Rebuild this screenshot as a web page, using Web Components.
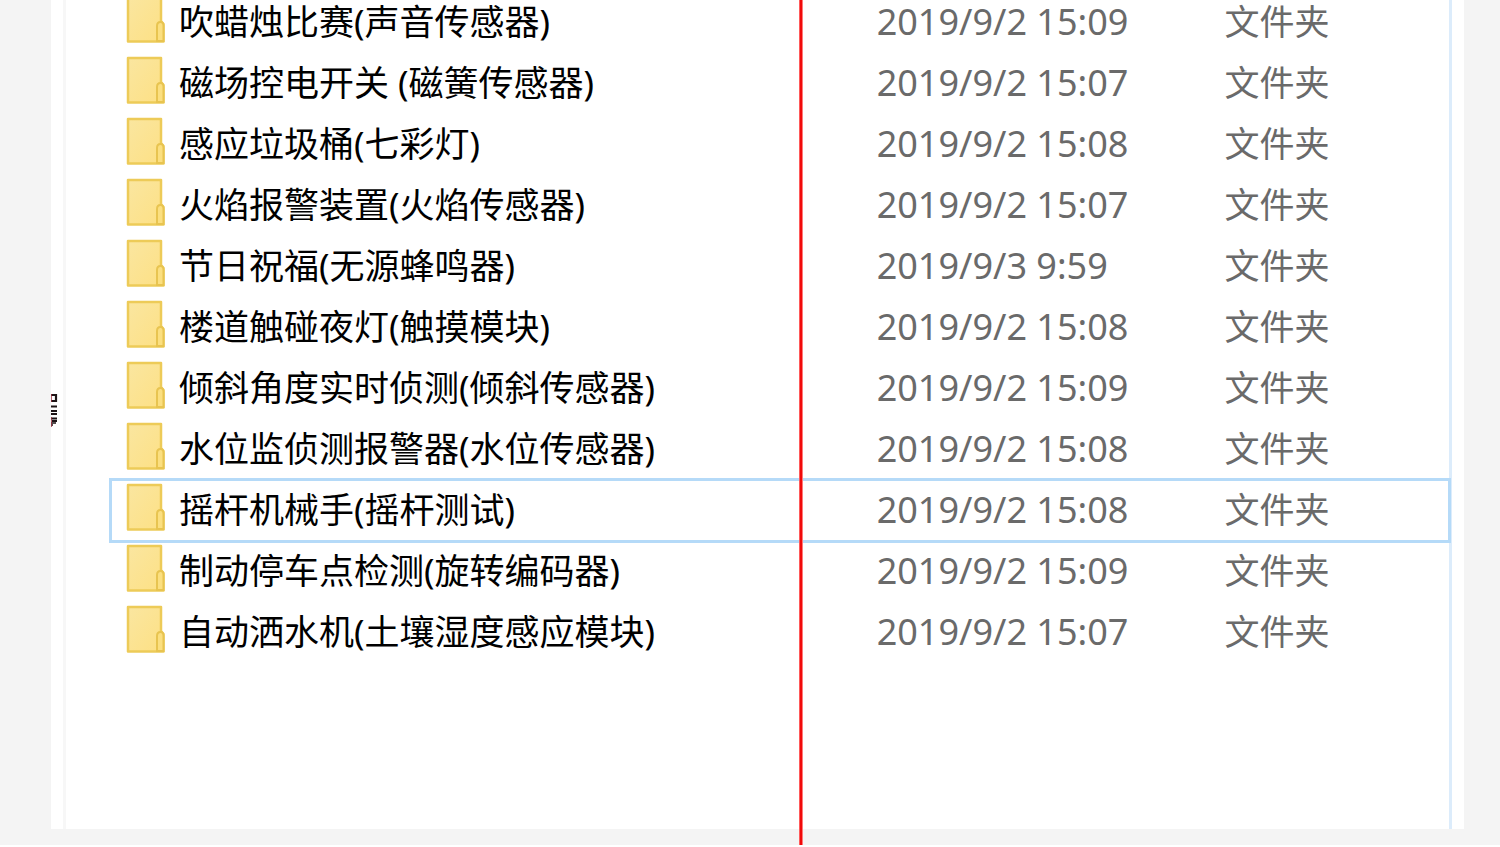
<!DOCTYPE html>
<html lang="zh-CN">
<head>
<meta charset="utf-8">
<title>文件夹</title>
<style>
html, body { margin: 0; background: #fff; }
body { font-family: "Noto Sans", "Noto Sans CJK SC", sans-serif; }
</style>
</head>
<body>
<explorer-window>
  <nav-strip slot="nav"></nav-strip>
  <file-list></file-list>
</explorer-window>
<script>
class ExplorerWindow extends HTMLElement {
  constructor() {
    super();
    this.attachShadow({ mode: 'open' }).innerHTML = `
      <style>
        :host { display: block; box-sizing: border-box; position: relative; height: calc(100vh - 2px); padding: 0 36px 16px 51px; background: #f4f4f4; overflow: hidden; }
        .panel { display: flex; height: 100%; background: #fff; overflow: hidden; }
        main { flex: 1; min-width: 0; padding-left: 45px; border-right: 3px solid #dcecfb; }
        .gutter { flex: none; width: 12px; }
        .guide { position: absolute; top: 0; bottom: 0; left: calc(50% + 49px); width: 4px; background: linear-gradient(90deg, #ff5a5a 1px, #f00a0a 1px, #f00a0a 3px, #ff7a7a 3px); }
      </style>
      <div class="panel">
        <slot name="nav"></slot>
        <main><slot></slot></main>
        <div class="gutter"></div>
      </div>
      <div class="guide"></div>`;
  }
}
class NavStrip extends HTMLElement {
  constructor() {
    super();
    this.attachShadow({ mode: 'open' }).innerHTML = `
      <style>
        :host { display: block; box-sizing: border-box; flex: none; width: 15px; padding-top: 392px; border-right: 3px solid #f7f7f7; }
        svg { display: block; }
      </style>
      <svg width="7" height="36" viewBox="0 0 7 36" aria-hidden="true">
        <g fill="none" stroke="#1c1416" stroke-width="2.200">
          <path d="M0 3H5V9H0M0 14.500H6M0 19H6M0 22H6M0 26.500H6M1 29H6"/>
          <path d="M0 31H5M0 33H2" stroke-width="1.500"/>
        </g>
        <path d="M0 2V10M0 25V35" stroke="#a03040" stroke-width="1.500"/>
      </svg>`;
  }
}
class FolderIcon extends HTMLElement {
  constructor() {
    super();
    this.attachShadow({ mode: 'open' }).innerHTML = `
      <style>:host { display: block; flex: none; width: 40px; height: 48px; } svg { display: block; overflow: visible; }</style>
      <svg width="40" height="48" viewBox="-1 3 40 48" aria-hidden="true">
        <defs><linearGradient id="g" x1="0" y1="0" x2="1" y2="1"><stop offset="0" stop-color="#fae6a0"/><stop offset="1" stop-color="#fde084"/></linearGradient></defs>
        <path d="M2 2H35V26L37.500 29V46.500H2Z" fill="url(#g)" stroke="#edcb58" stroke-width="2.500" stroke-linejoin="round"/>
        <path d="M31 46V31Q31 27 34.500 27Q37.500 27 37.500 31V46Z" fill="#fbdf80" stroke="#e8c450" stroke-width="2"/>
      </svg>`;
  }
}
const files = [
  ['吹蜡烛比赛(声音传感器)', '2019/9/2 15:09'],
  ['磁场控电开关 (磁簧传感器)', '2019/9/2 15:07'],
  ['感应垃圾桶(七彩灯)', '2019/9/2 15:08'],
  ['火焰报警装置(火焰传感器)', '2019/9/2 15:07'],
  ['节日祝福(无源蜂鸣器)', '2019/9/3 9:59'],
  ['楼道触碰夜灯(触摸模块)', '2019/9/2 15:08'],
  ['倾斜角度实时侦测(倾斜传感器)', '2019/9/2 15:09'],
  ['水位监侦测报警器(水位传感器)', '2019/9/2 15:08'],
  ['摇杆机械手(摇杆测试)', '2019/9/2 15:08', true],
  ['制动停车点检测(旋转编码器)', '2019/9/2 15:09'],
  ['自动洒水机(土壤湿度感应模块)', '2019/9/2 15:07']
];
class FileList extends HTMLElement {
  constructor() {
    super();
    this.attachShadow({ mode: 'open' }).innerHTML = `
      <style>
        :host { display: block; margin-top: -8px; }
        table { width: 100%; table-layout: fixed; border-collapse: separate; border-spacing: 0; }
        td { box-sizing: border-box; height: 61px; padding: 0 0 2px 3px; vertical-align: middle; white-space: nowrap; line-height: 48px; color: #6a6a6a; }
        .name { padding-left: 14px; color: #000; font-size: 35px; }
        .date { font-size: 36px; }
        .type { font-size: 35px; }
        .c1 { width: 57%; } .c2 { width: 26%; }
        .cell { display: flex; align-items: center; gap: 14px; }
        tr.focused { outline: 3px solid #b5daf8; outline-offset: -1px; }
      </style>
      <table>
        <colgroup><col class="c1"><col class="c2"><col></colgroup>
        <tbody>${files.map(([n, d, f]) => `<tr${f ? ' class="focused"' : ''}><td class="name"><div class="cell"><folder-icon></folder-icon><span>${n}</span></div></td><td class="date">${d}</td><td class="type">文件夹</td></tr>`).join('')}</tbody>
      </table>`;
  }
}
customElements.define('explorer-window', ExplorerWindow);
customElements.define('nav-strip', NavStrip);
customElements.define('folder-icon', FolderIcon);
customElements.define('file-list', FileList);
</script>
</body>
</html>
